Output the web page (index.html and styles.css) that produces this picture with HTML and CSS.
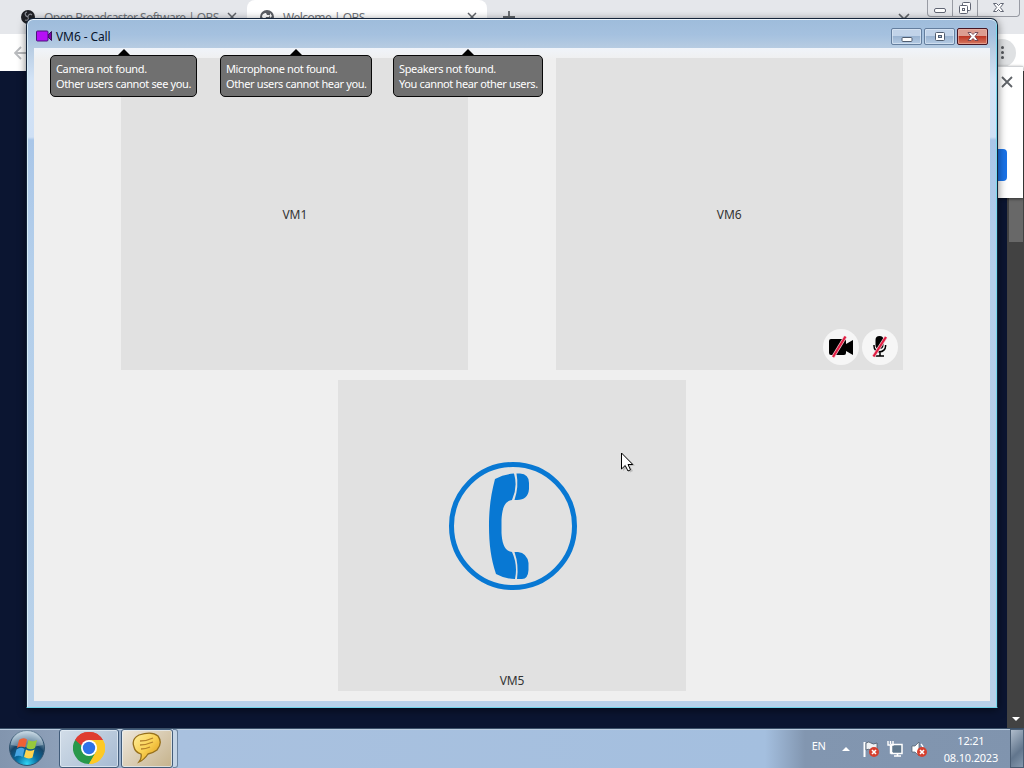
FILE: index.html
```html
<!DOCTYPE html>
<html lang="en">
<head>
  <meta charset="UTF-8">
  <title>VM6 - Call</title>
  <link rel="stylesheet" href="styles.css">
</head>
<body>

<div class="desktop">

  <!-- browser behind the call window -->
  <div class="browser">
    <div class="tabs">
      <div class="tab">
        <svg class="favicon" width="16" height="16" viewBox="0 0 16 16"><circle cx="8" cy="8" r="7" fill="#202126"/><path d="M7 3c-3 1-2 4 1 5M12 6c-2-2-4 0-4 2M5 11c3 1 4-1 3-3" fill="none" stroke="#8d9098" stroke-width="1.1"/></svg>
        <span class="tab-name first">Open Broadcaster Software | OBS</span>
        <svg width="10" height="10" viewBox="0 0 10 10"><path d="M1 1l8 8M9 1l-8 8" stroke="#5f6368" stroke-width="1.5"/></svg>
      </div>
      <div class="tab active">
        <svg class="favicon" width="16" height="16" viewBox="0 0 16 16"><circle cx="8" cy="8" r="7" fill="#5b5e64"/><path d="M3 8c0-3 2-4 4-4l1 2 3 0-1 2-3 0-1 3z" fill="#fff"/><path d="M11 4l2 3-2 2z" fill="#fff"/></svg>
        <span class="tab-name">Welcome | OBS</span>
        <svg width="10" height="10" viewBox="0 0 10 10"><path d="M1 1l8 8M9 1l-8 8" stroke="#5f6368" stroke-width="1.5"/></svg>
      </div>
      <svg class="new-tab" width="12" height="12" viewBox="0 0 12 12"><path d="M6 0v12M0 6h12" stroke="#5f6368" stroke-width="1.8"/></svg>
      <svg class="tab-search" width="12" height="8" viewBox="0 0 12 8"><path d="M1 1l5 5 5-5" fill="none" stroke="#5f6368" stroke-width="1.7"/></svg>
      <div class="browser-buttons">
        <span><svg width="12" height="16" viewBox="0 0 12 16"><rect x=".5" y="8.500" width="11" height="4" rx="1.500" fill="#fff" stroke="#606573"/></svg></span>
        <span><svg width="14" height="14" viewBox="0 0 14 14"><g fill="#fff" stroke="#606573"><rect x="4.500" y="1.500" width="8" height="8" rx="1"/><rect x="1.500" y="4.500" width="8" height="8" rx="1"/><rect x="4.500" y="7.500" width="2" height="2"/></g></svg></span>
        <span><svg width="14" height="12" viewBox="0 0 14 12"><path d="M1.500 1.500h3l2 2 2-2h3l-3.200 4 3.200 4h-3l-2-2-2 2h-3l3.200-4z" fill="#fff" stroke="#606573"/></svg></span>
      </div>
    </div>
    <div class="toolbar">
      <svg width="14" height="14" viewBox="0 0 14 14"><path d="M13 7H2M7 1L1 7l6 6" fill="none" stroke="#b9bbbe" stroke-width="1.800"/></svg>
      <div class="menu-button"><i></i><i></i><i></i></div>
    </div>
    <div class="page">
      <div class="scrollbar">
        <div class="thumb"></div>
        <div class="scroll-down"></div>
      </div>
    </div>
    <div class="bubble">
      <svg width="12" height="12" viewBox="0 0 12 12"><path d="M1 1l10 10M11 1L1 11" stroke="#5f6368" stroke-width="1.800"/></svg>
      <div class="bubble-button"></div>
    </div>
  </div>

  <!-- call window -->
  <div class="window">
    <div class="titlebar">
      <svg width="17" height="12" viewBox="0 0 17 12"><path d="M12 5l3.500-3.500v9L12 7z" fill="#7900a8" stroke="#39105a"/><rect x=".5" y="1" width="11.500" height="10" rx="1" fill="#b510f5" stroke="#4b137a"/></svg>
      <span class="title">VM6 - Call</span>
      <div class="window-buttons">
        <span><svg width="12" height="12" viewBox="0 0 12 12"><rect x="1" y="6.500" width="10" height="4" rx="1" fill="#fff" stroke="#505d70"/></svg></span>
        <span><svg width="12" height="12" viewBox="0 0 12 12"><rect x="1.500" y="1.500" width="9" height="8" rx="1" fill="#fff" stroke="#505d70"/><rect x="4.500" y="4.500" width="3" height="2" fill="#a9c0dc" stroke="#505d70"/></svg></span>
        <span class="close"><svg width="14" height="12" viewBox="0 0 14 12"><path d="M2 1.500h3l2 2 2-2h3L9 5.500l3 4H9l-2-2-2 2H2l3-4z" fill="#fff" stroke="#5b3545" stroke-width=".8"/></svg></span>
      </div>
    </div>
    <div class="client">
      <div class="row">
        <div class="tile">VM1</div>
        <div class="tile">
          VM6
          <div class="badges">
            <span class="badge"><svg width="28" height="24" viewBox="0 0 28 24"><path d="M4 4h13q2 0 2 2v3l7-4v15l-7-4v2q0 2-2 2H4q-2 0-2-2V6q0-2 2-2z"/><path d="M18.500 1.500L6 22" stroke="#f3c9d0" stroke-width="3.400"/><path d="M18.500 1.500L6 22" stroke="#e01d42" stroke-width="2.200"/></svg></span>
            <span class="badge"><svg width="24" height="24" viewBox="0 0 24 24"><rect x="7.500" y="1" width="8" height="13" rx="4"/><path d="M6 10v1a5.800 5.800 0 0 0 11.600 0v-1M12 17v4M7.500 21h8.500" fill="none" stroke="#000" stroke-width="1.500"/><path d="M18 2L5.500 21.500" stroke="#f3c9d0" stroke-width="3.400"/><path d="M18 2L5.500 21.500" stroke="#e01d42" stroke-width="2.200"/></svg></span>
          </div>
        </div>
      </div>
      <div class="row">
        <div class="tile calling">
          <svg width="130" height="130" viewBox="0 0 130 130">
            <circle cx="65" cy="65" r="61.500" fill="none" stroke="#0878d3" stroke-width="5"/>
            <g fill="#0878d3">
              <path d="M47 18Q56 13 66 12.500Q70 26 64 39C56 40 54 49 53.500 59V72C54 81 56 90 64 91Q70 104 67 118Q57 118 48 113C43 98 41 83 41 65S43 33 47 18z"/>
              <path d="M68.500 12.500H72Q81 13 81 22V28Q80 39 69 39H66.500Q71 26 68.500 12.500z"/>
              <path d="M66.500 91H70Q79 92 80.500 102V109Q80 118 74 118H69Q71 104 66.500 91z"/>
            </g>
          </svg>
          <span>VM5</span>
        </div>
      </div>
    </div>
    <div class="tip tip-camera">Camera not found.<br>Other users cannot see you.</div>
    <div class="tip tip-mic">Microphone not found.<br>Other users cannot hear you.</div>
    <div class="tip tip-speakers">Speakers not found.<br>You cannot hear other users.</div>
  </div>

  <svg class="cursor" width="16" height="22" viewBox="0 0 16 22"><path d="M3 3v16l4-3.500 3 5 3-1.500-3-5 5-.5z" fill="#777" opacity=".35"/><path d="M1.500 1v16l3.700-3.500L8 19l2.500-1.200L8 12.500h4.800z" fill="#fff" stroke="#000"/></svg>

  <div class="taskbar">
    <div class="start">
      <svg width="38" height="38" viewBox="0 0 38 38">
        <defs>
          <radialGradient id="orb" cx=".5" cy=".95" r=".9"><stop offset="0" stop-color="#31d5f5"/><stop offset=".35" stop-color="#086b9e"/><stop offset=".65" stop-color="#174568"/><stop offset="1" stop-color="#b7cad8"/></radialGradient>
        </defs>
        <circle cx="19" cy="19" r="17.500" fill="url(#orb)" stroke="#31536f"/>
        <path d="M3 16a16 15 0 0 1 32 0Q19 20 3 16z" fill="#d2e2ec" opacity=".4"/>
        <path d="M11 11q4-3 8-.5l-2 8q-4-2-8 .5z" fill="#ef6035"/>
        <path d="M20.500 11q4 2.500 8.500 0l-2 8q-4 2.500-8.500 0z" fill="#97c83c"/>
        <path d="M8.500 20.500q4-3 8-.5l-2 8q-4-2.500-8 0z" fill="#47a5e2"/>
        <path d="M18 20.500q4 2.500 8.500 0l-2 8q-4 2-8.500-.5z" fill="#ffd44e"/>
      </svg>
    </div>
    <div class="task task-chrome">
      <svg width="32" height="32" viewBox="0 0 32 32">
        <path d="M16 16L2.140 8A16 16 0 0 1 29.860 8z" fill="#df3c30"/>
        <path d="M16 16L29.860 8A16 16 0 0 1 16 32z" fill="#fdc925"/>
        <path d="M16 16L16 32A16 16 0 0 1 2.140 8z" fill="#28984b"/>
        <path d="M16 8h13.860L23 20z" fill="#fdc925"/>
        <path d="M23 20L16 32 12 22z" fill="#28984b"/>
        <path d="M2.140 8L9 20l7-12z" fill="#28984b"/>
        <path d="M2.140 8A16 16 0 0 1 29.860 8H16L9 14z" fill="#df3c30"/>
        <path d="M23 20L16 32A16 16 0 0 0 29.860 8H22z" fill="#fdc925"/>
        <circle cx="16" cy="16" r="8" fill="#fff"/><circle cx="16" cy="16" r="6.200" fill="#2f72e8"/>
      </svg>
    </div>
    <div class="task task-chat">
      <svg width="32" height="32" viewBox="0 0 32 32">
        <defs><linearGradient id="chat" x1="0" y1="0" x2="1" y2="1"><stop offset="0" stop-color="#fff0a0"/><stop offset=".5" stop-color="#f9d052"/><stop offset="1" stop-color="#d9900c"/></linearGradient></defs>
        <path d="M8 3Q21-1 27 4Q32 11 26 18Q22 21 17 22Q13 28 8 30Q11 26 10 22Q4 20 3 15Q0 7 8 3z" fill="url(#chat)" stroke="#96701c" stroke-width="1.300"/>
        <path d="M9 9q7 0 13-3M9 13q6 0 13-3M10 17q5 0 9-2" fill="none" stroke="#b6822c" stroke-width="1.300"/>
      </svg>
    </div>
    <div class="task-stack"></div>
    <div class="tray">
      <span class="lang">EN</span>
      <span class="tray-arrow"></span>
      <svg width="18" height="18" viewBox="0 0 18 18"><path d="M2.500 2v15" stroke="#fff" stroke-width="2"/><path d="M4 3q3-2 5 0t6 0v7q-3 1.500-6 0t-5 0z" fill="#eef1f4" stroke="#4c5968" stroke-width=".8"/><circle cx="12" cy="12" r="5" fill="#d5402f"/><path d="M10 10l4 4M14 10l-4 4" stroke="#fff" stroke-width="1.600"/></svg>
      <svg width="18" height="18" viewBox="0 0 18 18"><rect x="5.500" y="4.500" width="10.500" height="9" fill="#60788d" stroke="#fff" stroke-width="1.500"/><path d="M8 16h7M11.500 13v3" stroke="#fff" stroke-width="1.600"/><path d="M2 1v4h5V1M4.500 1v3M4.500 5v8H7" fill="none" stroke="#fff" stroke-width="1.400"/></svg>
      <svg width="18" height="18" viewBox="0 0 18 18"><path d="M2 6h3l4-4v14l-4-4H2z" fill="#fff" stroke="#4c5968" stroke-width=".7"/><path d="M11 4q2 2 2 4" fill="none" stroke="#fff" stroke-width="1.400"/><circle cx="12" cy="12" r="5" fill="#d5402f"/><path d="M10 10l4 4M14 10l-4 4" stroke="#fff" stroke-width="1.600"/></svg>
      <div class="clock">12:21<br>08.10.2023</div>
      <div class="show-desktop"></div>
    </div>
  </div>

</div>

</body>
</html>
```
FILE: styles.css
```css
* {
  box-sizing: border-box;
}

body {
  margin: 0;
  overflow: hidden;
  font-family: "Noto Sans", "Open Sans", sans-serif;
}

svg {
  display: block;
  flex: none;
}

.desktop {
  position: relative;
  width: 1024px;
  height: 768px;
  display: flex;
  flex-direction: column;
  overflow: hidden;
}

/* browser */
.browser {
  position: relative;
  flex: 1;
  display: flex;
  flex-direction: column;
}

.tabs {
  height: 34px;
  display: flex;
  align-items: center;
  background: #e5e7eb;
}

.tab {
  width: 247px;
  height: 34px;
  padding: 0 10px 0 20px;
  display: flex;
  align-items: center;
  font-size: 12px;
  color: #6f7378;
  letter-spacing: -0.5px;
}

.tab.active {
  width: 240px;
  background: #fff;
  border-radius: 8px 8px 0 0;
  padding-left: 12px;
}

.tab-name {
  flex: 1;
  margin-left: 8px;
  white-space: nowrap;
}

.tab-name.first {
  letter-spacing: -0.55px;
}

.new-tab {
  margin-left: 16px;
}

.tab-search {
  margin-left: auto;
  margin-right: 17px;
}

.browser-buttons {
  align-self: flex-start;
  width: 93px;
  height: 17px;
  margin-right: 4px;
  display: flex;
  border: 1px solid #989ba3;
  border-top: 0;
  border-radius: 0 0 4px 4px;
}

.browser-buttons span {
  display: flex;
  align-items: center;
  justify-content: center;
  width: 25px;
  border-right: 1px solid #989ba3;
}

.browser-buttons span:last-child {
  flex: 1;
  border: 0;
}

.toolbar {
  height: 37px;
  display: flex;
  align-items: center;
  justify-content: space-between;
  padding: 0 8px 0 14px;
  background: #fff;
}

.menu-button {
  width: 28px;
  height: 28px;
  border-radius: 50%;
  background: #dfe1e3;
  display: flex;
  flex-direction: column;
  align-items: center;
  justify-content: center;
  gap: 2px;
}

.menu-button i {
  width: 3px;
  height: 3px;
  border-radius: 50%;
  background: #55585d;
}

.page {
  flex: 1;
  display: flex;
  justify-content: flex-end;
  background: #0b1531;
}

.scrollbar {
  width: 17px;
  padding: 127px 1px 7px;
  display: flex;
  flex-direction: column;
  align-items: center;
  justify-content: space-between;
  background: #424242;
}

.thumb {
  width: 14px;
  height: 44px;
  background: #686868;
}

.scroll-down {
  border: 4px solid transparent;
  border-top-color: #fff;
  border-bottom: 0;
}

.bubble {
  position: absolute;
  top: 66px;
  right: 1px;
  width: 120px;
  height: 132px;
  padding: 9px 10px 0 0;
  display: flex;
  flex-direction: column;
  align-items: flex-end;
  background: #fff;
  border-top: 1px solid #d0d2d5;
  box-shadow: 0 1px 3px #0008;
}

.bubble-button {
  width: 60px;
  height: 32px;
  margin: 61px 6px 0 0;
  border-radius: 4px;
  background: #1a73e8;
}

/* call window */
.window {
  position: absolute;
  left: 26px;
  top: 18px;
  width: 972px;
  height: 690px;
  display: flex;
  flex-direction: column;
  padding: 0 7px 6px;
  border: 1px solid #14243a;
  border-bottom-color: #6fd4e8;
  border-radius: 7px 7px 0 0;
  background: linear-gradient(#9ebcdb 0, #a5c1df 16px, #b7cce2 29px, #d3e3f6 60px, #cfe0f5 118px, #a9c6e8 121px, #b4cfeb 250px, #b8d1e9 100%);
  box-shadow: inset 0 1px #eef6fd, inset 1px 0 #d8edf9, inset -1px 0 #78d9ed, 0 2px 9px #0008;
}

.titlebar {
  height: 29px;
  flex: none;
  display: flex;
  align-items: center;
  padding: 5px 2px 0 2px;
}

.title {
  flex: 1;
  margin-left: 3px;
  font-size: 12px;
  letter-spacing: -0.1px;
  color: #07132b;
}

.window-buttons {
  display: flex;
  gap: 2px;
  margin-top: 1px;
}

.window-buttons span {
  width: 31px;
  height: 17px;
  display: flex;
  align-items: center;
  justify-content: center;
  border: 1px solid #647e9e;
  border-radius: 2px;
  background: linear-gradient(#c1d3e9 45%, #9ab4d2 50%, #b5cbe4);
  box-shadow: inset 0 0 0 1px #dce8f4aa;
}

.window-buttons .close {
  border-color: #461624;
  background: linear-gradient(#dc9d91 45%, #bd3725 50%, #d57862);
  box-shadow: inset 0 0 0 1px #efb9ad99;
}

.client {
  flex: 1;
  display: flex;
  flex-direction: column;
  gap: 10px;
  padding: 10px 0;
  background: linear-gradient(#f0f4fa, #efefef 12px);
}

.row {
  height: 312px;
  display: flex;
  justify-content: space-evenly;
}

.row:last-child {
  height: 311px;
}

.tile {
  position: relative;
  width: 347px;
  display: flex;
  align-items: center;
  justify-content: center;
  background: #e1e1e1;
  color: #333;
  font-size: 12px;
  letter-spacing: -0.1px;
}

.calling {
  width: 348px;
  flex-direction: column;
  justify-content: space-between;
  padding: 81px 0 2px;
}

.calling svg {
  margin-left: 2px;
}

.badges {
  position: absolute;
  right: 5px;
  bottom: 5px;
  display: flex;
  gap: 3px;
}

.badge {
  width: 36px;
  height: 36px;
  border-radius: 50%;
  background: #f6f6f6;
  display: flex;
  align-items: center;
  justify-content: center;
}

.tip {
  position: absolute;
  top: 36px;
  height: 42px;
  padding: 5px;
  border: 1px solid #080808;
  border-radius: 5px;
  background: #707070;
  color: #fff;
  font-size: 11px;
  line-height: 15px;
  letter-spacing: -0.37px;
  white-space: nowrap;
}

.tip::before {
  content: "";
  position: absolute;
  left: 50%;
  top: -7px;
  margin-left: -6px;
  border: 6px solid transparent;
  border-top: 0;
  border-bottom-color: #000;
}

.tip-camera {
  left: 23px;
  width: 147px;
}

.tip-mic {
  left: 193px;
  width: 152px;
}

.tip-speakers {
  left: 366px;
  width: 150px;
}

.cursor {
  position: absolute;
  left: 620px;
  top: 452px;
}

/* taskbar */
.taskbar {
  height: 40px;
  display: flex;
  background: linear-gradient(90deg, #8295ae 0, #8d9fb8 55px, #a9c1df 180px, #a4bfdf 765px, #8296b0 805px, #8094ae);
  border-top: 1px solid #3b5068;
  box-shadow: inset 0 1px #bccddf;
}

.start {
  width: 59px;
  padding-left: 8px;
}

.task {
  width: 60px;
  height: 39px;
  padding-bottom: 2px;
  display: flex;
  align-items: center;
  justify-content: center;
  border: 1px solid #425c7a;
  border-radius: 3px;
  background: linear-gradient(135deg, #d2dde8, #a6bad2);
  box-shadow: inset 0 0 0 1px #e8f1f9aa;
}

.task-chat {
  width: 52px;
  margin-left: 2px;
  background: linear-gradient(135deg, #eee7dc, #c5b28b);
}

.task-stack {
  width: 5px;
  border: 1px solid #6b839e;
  border-left: 0;
  border-radius: 0 3px 3px 0;
  background: #c4d4e5;
}

.tray {
  margin-left: auto;
  display: flex;
  align-items: center;
  gap: 6px;
  color: #fff;
  font-size: 11px;
  letter-spacing: -0.2px;
}

.lang {
  margin-right: 10px;
  padding-bottom: 6px;
}

.tray-arrow {
  margin-right: 6px;
  border: 4px solid transparent;
  border-top: 0;
  border-bottom-color: #fff;
}

.clock {
  margin: 0 6px 0 10px;
  line-height: 17px;
  text-align: center;
}

.show-desktop {
  width: 14px;
  height: 39px;
  border: 1px solid #4a5d73;
  background: linear-gradient(135deg, #b0bdcc, #62768d 60%, #8498ad);
}
```
